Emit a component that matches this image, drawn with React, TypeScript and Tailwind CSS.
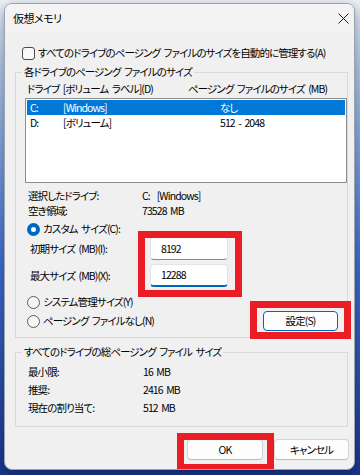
const font = "font-['Noto_Sans_CJK_JP','Noto_Sans',sans-serif] [font-feature-settings:'palt']";

function Radio({ checked }: { checked?: boolean }) {
  return checked ? (
    <span className="w-[13px] h-[13px] rounded-full border-[4px] border-[#0067c0] bg-white shrink-0" />
  ) : (
    <span className="w-[13px] h-[13px] rounded-full border border-[#5c5c5c] bg-[#f7f7f7] shrink-0" />
  );
}

function Field({ value, focused }: { value: string; focused?: boolean }) {
  return (
    <div
      className={`w-[78px] h-[23px] bg-white rounded-[4px] border border-[#e3e3e3] flex items-center pl-[10px] ${
        focused ? "border-b-2 border-b-[#0067c0]" : "border-b-[#8a8a8a]"
      }`}
    >
      {value}
    </div>
  );
}

function Info({ label, value, w, h }: { label: string; value: string; w: string; h: string }) {
  return (
    <div className={`flex items-center ${h}`}>
      <span className={`${w} shrink-0`}>{label}</span>
      <span>{value}</span>
    </div>
  );
}

export default function App() {
  return (
    <div
      className={`w-[360px] h-[475px] overflow-hidden pt-[3px] pl-[4px] bg-[linear-gradient(180deg,#eef2f8_0%,#b8cfee_12%,#3d6fd3_55%,#1a3690_100%)] ${font} text-[10.5px] leading-[16px] tracking-[-0.9px] [word-spacing:2px] text-black whitespace-nowrap`}
    >
      <div className="relative w-[351px] h-[467px] bg-[#f0f0f0] rounded-[8px] border border-[#9aa3ae] shadow-[0_4px_14px_rgba(0,0,0,0.35)] overflow-hidden">
        {/* title bar */}
        <div className="h-[28px] flex items-center justify-between pl-[8px] pr-[5px] bg-[#f3f3f3]">
          <span className="text-[11px] tracking-[-0.5px]">仮想メモリ</span>
          <svg width="11" height="11" viewBox="0 0 11 11">
            <path d="M0.5 0.5L10.5 10.5M10.5 0.5L0.5 10.5" stroke="#1a1a1a" strokeWidth="1" />
          </svg>
        </div>

        <div className="pl-[10px] pr-[4px]">
          <div className="mt-[13px] h-[16px] ml-[7px] flex items-center gap-[3px]">
            <span className="w-[13px] h-[13px] shrink-0 rounded-[3px] border border-[#4a4a4a] bg-[#f9f9f9]" />
            <span>すべてのドライブのページング ファイルのサイズを自動的に管理する(A)</span>
          </div>

          {/* drive group */}
          <fieldset className="w-[333px] mt-[3px] border border-[#d9d9d9] pb-[5px]">
            <legend className="ml-[6px] px-[2px]">各ドライブのページング ファイルのサイズ</legend>
            <div className="pl-[9px]">
              <div className="mt-[1px] h-[16px] flex">
                <span className="ml-[2px] w-[161px] shrink-0">ドライブ [ボリューム ラベル](D)</span>
                <span>ページング ファイルのサイズ (MB)</span>
              </div>
              <div className="mt-[1px] h-[85px] border border-[#8d8d8d] bg-white pt-[1px] px-[1px] leading-[14px]">
                <div className="h-[15px] flex items-center pl-[3px] bg-[#0078d7] text-white">
                  <span className="w-[33px] shrink-0">C:</span>
                  <span className="w-[157px] shrink-0">[Windows]</span>
                  <span>なし</span>
                </div>
                <div className="h-[15px] flex items-center pl-[3px]">
                  <span className="w-[33px] shrink-0">D:</span>
                  <span className="w-[157px] shrink-0">[ボリューム]</span>
                  <span>512 - 2048</span>
                </div>
              </div>

              <div className="mt-[5px] ml-[3px]">
                <Info label="選択したドライブ:" value={"C:\u00a0\u00a0[Windows]"} w="w-[114px]" h="h-[15px]" />
                <Info label="空き領域:" value="73528 MB" w="w-[114px]" h="h-[15px]" />
              </div>

              <div className="mt-[4px] h-[14px] ml-[2px] flex items-center gap-[3px]">
                <Radio checked />
                <span>カスタム サイズ(C):</span>
              </div>
              <div className="mt-[1px] ml-[5px] flex items-center">
                <span className="w-[120px] shrink-0">初期サイズ (MB)(I):</span>
                <Field value="8192" />
              </div>
              <div className="mt-[4px] ml-[5px] flex items-center">
                <span className="w-[120px] shrink-0">最大サイズ (MB)(X):</span>
                <Field value="12288" focused />
              </div>

              <div className="mt-[7px] h-[16px] ml-[2px] flex items-center gap-[3px]">
                <Radio />
                <span>システム管理サイズ(Y)</span>
              </div>
              <div className="h-[22px] ml-[2px] flex items-center gap-[3px]">
                <Radio />
                <span>ページング ファイルなし(N)</span>
                <button className="ml-auto mr-[9px] w-[75px] h-[20px] rounded-[4px] border border-[#0067c0] bg-[#fdfdfd] flex items-center justify-center">
                  設定(S)
                </button>
              </div>
            </div>
          </fieldset>

          {/* totals group */}
          <fieldset className="w-[333px] mt-[6px] border border-[#d9d9d9] pt-[3px] pb-[9px]">
            <legend className="ml-[6px] px-[2px]">すべてのドライブの総ページング ファイル サイズ</legend>
            <div className="pl-[12px]">
              <Info label="最小限:" value="16 MB" w="w-[115px]" h="h-[18px]" />
              <Info label="推奨:" value="2416 MB" w="w-[115px]" h="h-[18px]" />
              <Info label="現在の割り当て:" value="512 MB" w="w-[115px]" h="h-[18px]" />
            </div>
          </fieldset>

          <div className="mt-[12px] flex justify-end gap-[11px] mr-[1px]">
            <button className="w-[76px] h-[21px] rounded-[4px] border border-[#d3d3d3] border-b-[#bcbcbc] bg-[#fdfdfd] flex items-center justify-center">
              OK
            </button>
            <button className="w-[75px] h-[21px] rounded-[4px] border border-[#d3d3d3] border-b-[#bcbcbc] bg-[#fdfdfd] flex items-center justify-center">
              キャンセル
            </button>
          </div>
        </div>

        {/* red highlight frames */}
        <div className="absolute left-[133px] top-[227px] w-[104px] h-[66px] border-[7px] border-[#ec1c24]" />
        <div className="absolute left-[245px] top-[297px] w-[101px] h-[38px] border-[7px] border-[#ec1c24]" />
        <div className="absolute left-[172px] top-[429px] w-[97px] h-[38px] border-[7px] border-[#ec1c24]" />
      </div>
    </div>
  );
}
